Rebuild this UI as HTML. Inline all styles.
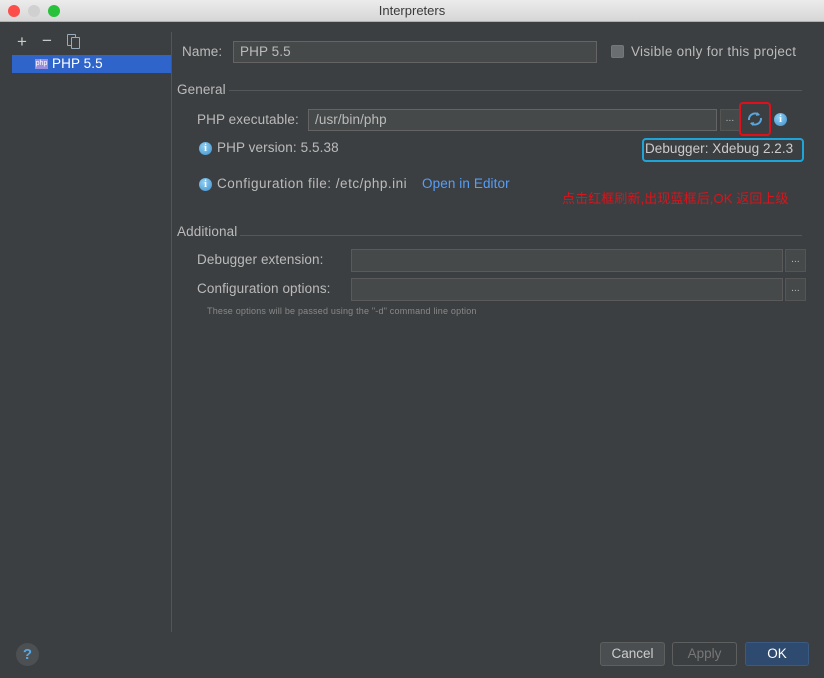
<!DOCTYPE html>
<html><head><meta charset="utf-8"><style>
*{margin:0;padding:0;box-sizing:border-box}
body{width:824px;height:678px;background:#3c3f41;font-family:"Liberation Sans","Noto Sans CJK SC",sans-serif;font-size:13.5px;letter-spacing:0.1px;color:#bbbbbb;position:relative;overflow:hidden}
.a{position:absolute;white-space:nowrap}
.tb{left:0;top:0;width:824px;height:22px;background:linear-gradient(#ececec,#d6d6d6);border-bottom:1px solid #b0b0b0;text-align:center;line-height:22px;color:#3a3a3a;font-size:13px;letter-spacing:0}
.dot{width:12px;height:12px;border-radius:50%;top:5px}
.fld{background:#45494a;border:1px solid #646464}
.btn{border:1px solid #5e6060;border-radius:3px;background:#4a4e50;text-align:center;line-height:22px;font-size:13.5px;letter-spacing:0}
.info{width:13px;height:13px;border-radius:50%;background:radial-gradient(circle at 40% 35%,#8fd0f5,#3d8fcc);color:#fff;font-size:10px;font-weight:bold;text-align:center;line-height:13px;font-family:"Liberation Serif",serif;letter-spacing:0}
.line{height:1px;background:#555758}
</style></head><body>
<div class="a tb">Interpreters</div>
<div class="a dot" style="left:8px;background:#fc4f4a"></div>
<div class="a dot" style="left:28px;background:#d0d0d0"></div>
<div class="a dot" style="left:48px;background:#27c13a"></div>

<div class="a" style="left:17px;top:32px;font-size:17px;color:#ccc">+</div>
<div class="a" style="left:42px;top:31px;font-size:17px;color:#ccc">−</div>
<div class="a" style="left:67px;top:34px;width:9px;height:12px;border:1.5px solid #9ab;border-radius:1px"></div>
<div class="a" style="left:71px;top:37px;width:9px;height:12px;border:1.5px solid #9ab;background:#3c3f41;border-radius:1px"></div>
<div class="a" style="left:12px;top:55px;width:159px;height:18px;background:#2f65ca"></div>
<div class="a" style="left:35px;top:59px;width:13px;height:10px;background:#9a8ee0;color:#fff;font-size:7px;line-height:10px;text-align:center;letter-spacing:0">php</div>
<div class="a" style="left:52px;top:56px;color:#fff">PHP 5.5</div>
<div class="a" style="left:171px;top:32px;width:1px;height:600px;background:#555"></div>

<div class="a" style="left:182px;top:44px">Name:</div>
<div class="a fld" style="left:233px;top:41px;width:364px;height:22px;padding:2px 6px">PHP 5.5</div>
<div class="a" style="left:611px;top:45px;width:13px;height:13px;background:#6b6e70;border:1px solid #777;border-radius:2px"></div>
<div class="a" style="left:631px;top:44px;letter-spacing:0.3px">Visible only for this project</div>

<div class="a" style="left:177px;top:82px">General</div>
<div class="a line" style="left:229px;top:90px;width:573px"></div>
<div class="a" style="left:197px;top:112px">PHP executable:</div>
<div class="a fld" style="left:308px;top:109px;width:409px;height:22px;padding:2px 6px">/usr/bin/php</div>
<div class="a" style="left:720px;top:109px;width:20px;height:22px;background:#45494a;border:1px solid #555;text-align:center;font-size:10px;line-height:18px">...</div>
<div class="a" style="left:739px;top:102px;width:32px;height:34px;border:2.5px solid #e0101a;border-radius:4px"></div>
<svg class="a" style="left:746px;top:111px" width="18" height="16" viewBox="0 0 18 16"><path d="M3 9a6 6 0 0 1 10-5" fill="none" stroke="#5aa7e0" stroke-width="2"/><path d="M15 7a6 6 0 0 1-10 5" fill="none" stroke="#5aa7e0" stroke-width="2"/><path d="M11 1l3 3-4 1z M7 15l-3-3 4-1z" fill="#5aa7e0"/></svg>
<div class="a info" style="left:774px;top:113px">i</div>

<div class="a info" style="left:199px;top:142px">i</div>
<div class="a" style="left:217px;top:140px">PHP version: 5.5.38</div>
<div class="a" style="left:642px;top:138px;width:162px;height:24px;border:2.5px solid #1fa4d8;border-radius:4px"></div>
<div class="a" style="left:645px;top:141px;color:#ccc;letter-spacing:0.05px">Debugger: Xdebug 2.2.3</div>

<div class="a info" style="left:199px;top:178px">i</div>
<div class="a" style="left:217px;top:176px;letter-spacing:0.5px">Configuration file: /etc/php.ini</div>
<div class="a" style="left:422px;top:176px;color:#589df6">Open in Editor</div>
<div class="a" style="left:562px;top:188px;color:#d8141c;font-size:13px;letter-spacing:0.1px">点击红框刷新,出现蓝框后,OK 返回上级</div>

<div class="a" style="left:177px;top:224px">Additional</div>
<div class="a line" style="left:240px;top:235px;width:562px"></div>
<div class="a" style="left:197px;top:252px">Debugger extension:</div>
<div class="a fld" style="left:351px;top:249px;width:432px;height:23px;border-color:#5a5a5a"></div>
<div class="a" style="left:785px;top:249px;width:21px;height:23px;background:#45494a;border:1px solid #555;text-align:center;font-size:10px;line-height:20px">...</div>
<div class="a" style="left:197px;top:281px">Configuration options:</div>
<div class="a fld" style="left:351px;top:278px;width:432px;height:23px;border-color:#5a5a5a"></div>
<div class="a" style="left:785px;top:278px;width:21px;height:23px;background:#45494a;border:1px solid #555;text-align:center;font-size:10px;line-height:20px">...</div>
<div class="a" style="left:207px;top:306px;font-size:9px;color:#888;letter-spacing:0.2px">These options will be passed using the "-d" command line option</div>

<div class="a" style="left:16px;top:643px;width:23px;height:23px;border-radius:50%;background:#4d5052;color:#5aa7e0;font-weight:bold;text-align:center;line-height:23px;font-size:15px">?</div>
<div class="a btn" style="left:600px;top:642px;width:65px;height:24px;color:#ccc">Cancel</div>
<div class="a btn" style="left:672px;top:642px;width:65px;height:24px;color:#777;background:#3c3f41">Apply</div>
<div class="a btn" style="left:745px;top:642px;width:64px;height:24px;color:#fff;background:#2e4a6e;border-color:#3b5a82">OK</div>
</body></html>
